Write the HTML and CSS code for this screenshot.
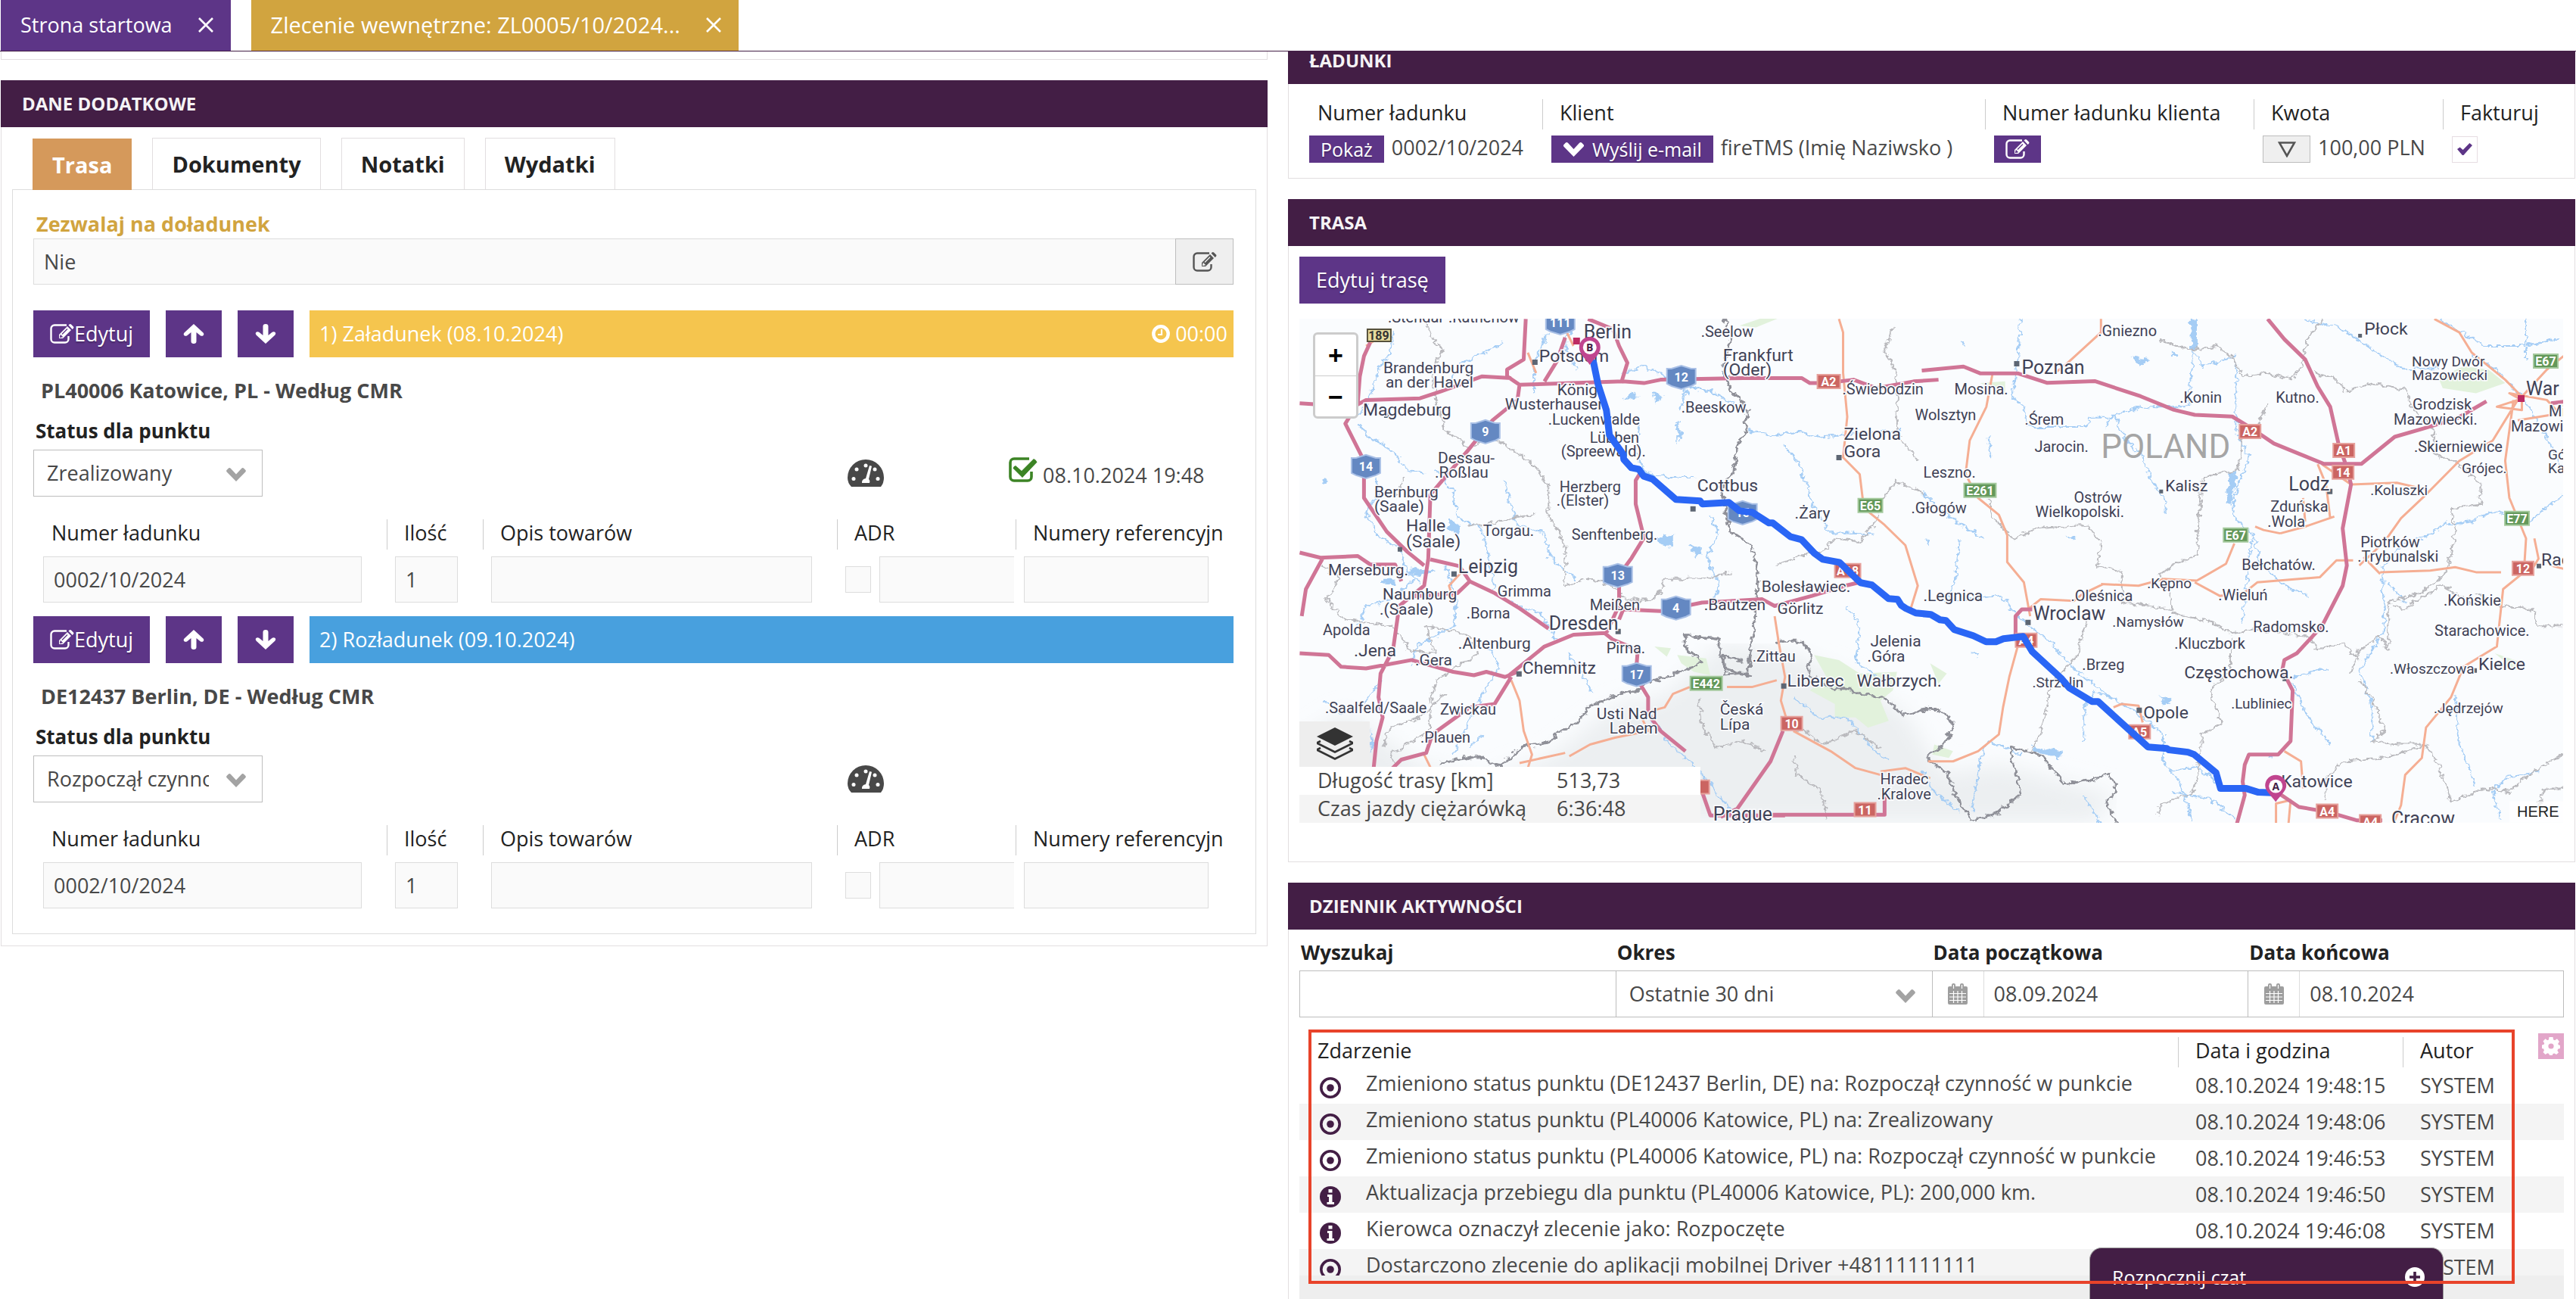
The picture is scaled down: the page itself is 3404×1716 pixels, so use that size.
FILE: index.html
```html
<!DOCTYPE html>
<html lang="pl">
<head>
<meta charset="utf-8">
<title>Zlecenie wewnętrzne: ZL0005/10/2024</title>
<link rel="stylesheet" href="styles.css">
</head>
<body>
<svg class="sprite" aria-hidden="true">
  <symbol id="i-close" viewBox="0 0 20 20"><path d="M1 1 19 19M19 1 1 19" fill="none" stroke="currentColor" stroke-width="2.6"/></symbol>
  <symbol id="i-edit" viewBox="0 0 32 26"><path d="M22 1.500H6a4.500 4.500 0 0 0-4.500 4.500v14A4.500 4.500 0 0 0 6 24.500h14a4.500 4.500 0 0 0 4.500-4.500v-4" fill="none" stroke="currentColor" stroke-width="2.400"/><path d="m12 14 11-11 5 5-11 11h-5zM24.500 1.500l1.500-1.300q1-.5 2 .3l3 3q.8 1 .1 2L29.700 7z" fill="currentColor"/><path d="m14.200 15-.6 2.400 2.400-.5zM16 13.500l7-7" fill="none" stroke="var(--cut)" stroke-width="1.300"/></symbol>
  <symbol id="i-up" viewBox="0 0 28 26"><path d="M14 0 26.500 11.500q1.500 2 .2 3.400-1.800 1.700-4 .3L17.500 11v12q0 3-3.500 3t-3.500-3V11l-5.200 4.200q-2.200 1.400-4-.3-1.300-1.400.2-3.400z" fill="currentColor"/></symbol>
  <symbol id="i-down" viewBox="0 0 28 26"><path d="M14 26 1.500 14.500q-1.500-2-.2-3.400 1.800-1.700 4-.3l5.200 4.200V3q0-3 3.500-3t3.500 3v12l5.200-4.200q2.200-1.400 4 .3 1.300 1.400-.2 3.400z" fill="currentColor"/></symbol>
  <symbol id="i-chevron" viewBox="0 0 26 18"><path d="M3 .5Q4.500-.5 6 1l7 7.500L20 1q1.500-1.500 3-.5l2.500 2.500q.8 1.200-.2 2.400L13 18 .7 5.400q-1-1.200-.2-2.400z" fill="currentColor"/></symbol>
  <symbol id="i-clock" viewBox="0 0 24 24"><circle cx="12" cy="12" r="9.700" fill="none" stroke="currentColor" stroke-width="4.400"/><path d="M13 6v7H8" fill="none" stroke="currentColor" stroke-width="2.200"/></symbol>
  <symbol id="i-gauge" viewBox="0 0 48 36"><path d="M5 36Q0 31 0 24a24 24 0 0 1 48 0q0 7-4 12z" fill="currentColor"/><g fill="#fff"><circle cx="8" cy="25.500" r="2.500"/><circle cx="12" cy="13" r="2.500"/><circle cx="24" cy="8" r="2.500"/><circle cx="36" cy="13" r="2.500"/><circle cx="40" cy="25.500" r="2.500"/><path d="m29 8 3 .8-4 17.200q2 1.500 1 5h-10q-.5-5 5-6z"/></g></symbol>
  <symbol id="i-done" viewBox="0 0 38 33"><path d="M27 2H7a5 5 0 0 0-5 5v19a5 5 0 0 0 5 5h18a5 5 0 0 0 5-5v-7" fill="none" stroke="currentColor" stroke-width="3.600"/><path d="m9 11 8 7L33 2q3 1 4.500 4.500L18 27 5.500 14.500q1-3 3.500-3.500z" fill="currentColor"/></symbol>
  <symbol id="i-triangle" viewBox="0 0 24 21"><path d="M2 1.500h20L12 19z" fill="none" stroke="currentColor" stroke-width="2.600"/></symbol>
  <symbol id="i-calendar" viewBox="0 0 26 28"><path d="M2 4h3V2q0-2 2.500-2T10 2v2h6V2q0-2 2.500-2T21 2v2h3q2 0 2 2v20q0 2-2 2H2q-2 0-2-2V6q0-2 2-2z" fill="currentColor"/><path d="M7.500 2v5M18.500 2v5M2 13.500h22M2 18h22M2 22.500h22M7.500 10v16M13 10v16M18.500 10v16" stroke="#fff" stroke-width="1.200" fill="none"/></symbol>
  <symbol id="i-dot" viewBox="0 0 28 28"><circle cx="14" cy="14" r="12.200" fill="none" stroke="currentColor" stroke-width="3.600"/><circle cx="14" cy="14" r="4.800" fill="currentColor"/></symbol>
  <symbol id="i-info" viewBox="0 0 28 28"><circle cx="14" cy="14" r="14" fill="currentColor"/><path d="M11.500 4h5v4.500h-5zM10 11h6.500v10H19v3h-9.500v-3H12v-7h-2z" fill="#fff"/></symbol>
  <symbol id="i-gear" viewBox="0 0 24 24"><path d="m9.500 0h5l.6 3.500 2 .8L20 2.300 23 6l-1.800 2.700.6 1.500L24 11v4l-2.800.8-.8 2L22 20.500 19 23l-2.700-1.600-1.800.7L13.800 24H10l-.8-2-1.800-.7L4.500 23 1.500 20l1.400-2.600-.7-1.800L0 15v-4.500l2.600-.7.6-1.500L1.500 5.500l3-3.200 2.600 1.900 1.800-.7z" fill="#fff"/><circle cx="12" cy="12" r="3.600" fill="#e2a6c9"/></symbol>
  <symbol id="i-layers" viewBox="0 0 48 44"><path d="M24 0 48 12 24 24 0 12z" fill="#333"/><path d="m5 18-5 2.500 24 12 24-12-5-2.500M5 27l-5 2.500 24 12 24-12-5-2.500" fill="none" stroke="#333" stroke-width="2.600"/></symbol>
  <symbol id="i-plus" viewBox="0 0 26 26"><circle cx="13" cy="13" r="13" fill="#fff"/><path d="M13 6v14M6 13h14" stroke="#431e45" stroke-width="3.600"/></symbol>
</svg>

<nav class="windows" aria-label="Otwarte karty">
  <div class="window"><a href="#start">Strona startowa</a><button aria-label="Zamknij"><svg class="x"><use href="#i-close"/></svg></button></div>
  <div class="window window-current"><a href="#zlecenie">Zlecenie wewnętrzne: ZL0005/10/2024...</a><button aria-label="Zamknij"><svg class="x"><use href="#i-close"/></svg></button></div>
</nav>

<main class="columns">
  <div class="column">
    <div class="panel panel-tail"></div>
    <section class="panel extra">
      <h2 class="panel-head">DANE DODATKOWE</h2>
      <div class="tabs" role="tablist">
        <button class="tab tab-active" role="tab">Trasa</button>
        <button class="tab" role="tab">Dokumenty</button>
        <button class="tab" role="tab">Notatki</button>
        <button class="tab" role="tab">Wydatki</button>
      </div>
      <div class="tab-body">
        <label class="gold-label" for="extra-load">Zezwalaj na doładunek</label>
        <div class="joined">
          <input id="extra-load" class="box" value="Nie" readonly>
          <button class="btn-grey btn-edit" aria-label="Edytuj"><svg class="edit"><use href="#i-edit"/></svg></button>
        </div>

        <article class="point">
          <div class="point-bar">
            <button class="btn"><svg class="edit"><use href="#i-edit"/></svg>Edytuj</button>
            <button class="btn btn-arrow" aria-label="W górę"><svg><use href="#i-up"/></svg></button>
            <button class="btn btn-arrow" aria-label="W dół"><svg><use href="#i-down"/></svg></button>
            <div class="stage stage-load"><span>1) Załadunek (08.10.2024)</span><span class="time"><svg class="clock"><use href="#i-clock"/></svg>00:00</span></div>
          </div>
          <h3 class="place">PL40006 Katowice, PL - Według CMR</h3>
          <label class="field-label" for="st1">Status dla punktu</label>
          <div class="status">
            <div class="select"><select id="st1"><option>Zrealizowany</option></select><svg class="chev"><use href="#i-chevron"/></svg></div>
            <svg class="gauge"><use href="#i-gauge"/></svg>
            <div class="done"><svg><use href="#i-done"/></svg><span>08.10.2024 19:48</span></div>
          </div>
          <table class="cargo">
            <colgroup><col class="c1"><col class="c2"><col class="c3"><col class="c4"><col class="c5"></colgroup>
            <thead><tr><th>Numer ładunku</th><th>Ilość</th><th>Opis towarów</th><th>ADR</th><th><span class="cut">Numery referencyjne</span></th></tr></thead>
            <tbody><tr>
              <td><input class="box" value="0002/10/2024" aria-label="Numer ładunku" readonly></td>
              <td><input class="box" value="1" aria-label="Ilość" readonly></td>
              <td><input class="box" aria-label="Opis towarów" readonly></td>
              <td class="adr"><div><input type="checkbox" class="tick tick-off" aria-label="ADR" disabled><input class="box" aria-label="Klasa ADR" readonly></div></td>
              <td><input class="box" aria-label="Numery referencyjne" readonly></td>
            </tr></tbody>
          </table>
        </article>

        <article class="point">
          <div class="point-bar">
            <button class="btn"><svg class="edit"><use href="#i-edit"/></svg>Edytuj</button>
            <button class="btn btn-arrow" aria-label="W górę"><svg><use href="#i-up"/></svg></button>
            <button class="btn btn-arrow" aria-label="W dół"><svg><use href="#i-down"/></svg></button>
            <div class="stage stage-unload"><span>2) Rozładunek (09.10.2024)</span></div>
          </div>
          <h3 class="place">DE12437 Berlin, DE - Według CMR</h3>
          <label class="field-label" for="st2">Status dla punktu</label>
          <div class="status">
            <div class="select"><select id="st2"><option>Rozpoczął czynność w punkcie</option></select><svg class="chev"><use href="#i-chevron"/></svg></div>
            <svg class="gauge"><use href="#i-gauge"/></svg>
          </div>
          <table class="cargo">
            <colgroup><col class="c1"><col class="c2"><col class="c3"><col class="c4"><col class="c5"></colgroup>
            <thead><tr><th>Numer ładunku</th><th>Ilość</th><th>Opis towarów</th><th>ADR</th><th><span class="cut">Numery referencyjne</span></th></tr></thead>
            <tbody><tr>
              <td><input class="box" value="0002/10/2024" aria-label="Numer ładunku" readonly></td>
              <td><input class="box" value="1" aria-label="Ilość" readonly></td>
              <td><input class="box" aria-label="Opis towarów" readonly></td>
              <td class="adr"><div><input type="checkbox" class="tick tick-off" aria-label="ADR" disabled><input class="box" aria-label="Klasa ADR" readonly></div></td>
              <td><input class="box" aria-label="Numery referencyjne" readonly></td>
            </tr></tbody>
          </table>
        </article>
      </div>
    </section>
  </div>

  <div class="column column-right">
    <section class="panel loads-panel">
      <h2 class="panel-head">ŁADUNKI</h2>
      <table class="loads">
        <colgroup><col class="l1"><col class="l2"><col class="l3"><col class="l4"><col class="l5"></colgroup>
        <thead><tr><th>Numer ładunku</th><th>Klient</th><th>Numer ładunku klienta</th><th>Kwota</th><th>Fakturuj</th></tr></thead>
        <tbody><tr>
          <td><div class="cell"><button class="btn btn-small">Pokaż</button><span>0002/10/2024</span></div></td>
          <td><div class="cell"><button class="btn btn-small"><svg class="chev-btn"><use href="#i-chevron"/></svg>Wyślij e-mail</button><span>fireTMS (Imię Naziwsko )</span></div></td>
          <td><div class="cell"><button class="btn btn-small" aria-label="Edytuj numer"><svg class="edit"><use href="#i-edit"/></svg></button></div></td>
          <td><div class="cell"><button class="btn-grey btn-tri" aria-label="Szczegóły kwoty"><svg><use href="#i-triangle"/></svg></button><span>100,00 PLN</span></div></td>
          <td><div class="cell"><input type="checkbox" class="tick" aria-label="Fakturuj" checked></div></td>
        </tr></tbody>
      </table>
    </section>

    <section class="panel route-panel">
      <h2 class="panel-head">TRASA</h2>
      <div class="route">
        <button class="btn">Edytuj trasę</button>
        <div class="map">
          <svg class="map-art" viewBox="0 0 1671 666" role="img" aria-label="Mapa trasy Katowice – Berlin">
            <defs>
              <filter id="meander" x="-5%" y="-5%" width="110%" height="110%">
                <feTurbulence type="fractalNoise" baseFrequency=".06" numOctaves="3" seed="4"/>
                <feDisplacementMap in="SourceGraphic" scale="22" xChannelSelector="R" yChannelSelector="G"/>
              </filter>
              <filter id="relief" x="0" y="0" width="100%" height="100%">
                <feGaussianBlur stdDeviation="14"/>
              </filter>
            </defs>
            <rect width="1671" height="666" fill="#fafcfe"/>
            <g fill="#eceff1" filter="url(#relief)"><path d="M0 560 60 520 160 590 240 610 330 580 420 510 480 500 560 430 640 440 720 470 800 520 850 600 930 590 1000 610 1080 630 1050 666H0z"/></g>
            <g transform="translate(-27 -22) scale(.5485 .4464)" fill="none" stroke-linejoin="round">
              <g fill="#e2f2dc"><path d="M1290 1045 1350 1060 1400 1100 1490 1095 1480 1150 1450 1180 1470 1240 1420 1260 1390 1230 1340 1230 1340 1190 1280 1150 1320 1110z"/><path d="M960 1045l70 10 10 50-40-10-30-25zM905 1020l40 5-10 25z"/><path d="M1110 70l60-25h40l-60 30z"/></g>
              <g class="water" filter="url(#meander)"><path d="M275 90 270 150 240 200 215 290 190 340M195 360 215 400 250 420 280 450 310 500 345 505M232 520 240 570 210 620 235 690 290 730 310 800 340 830M410 240l30-60 40-20 60-40M650 90l-20 50M700 80l-10 60 30 60M545 530l10 60 20 70 60 20 20 80 60 60M380 500l40 60 10 80 60 30 20 100 10 90 60 40 50 20 40 80M870 360l-10 80 20 60 60 20h60M1040 630l20 60-30 60 30 90-20 70M960 350l10 60M985 260l-20 60M830 210l50-20 50 30 60 30 60 20 60 40M1130 380l60 15 60-10 60 15 60-10 130-10M1215 420l40 60 30 120 40 80 110 10M190 960l20-60 60-20 60-60M400 780l30 100-10 80-90 60-10 60M695 1040l30 50 30 70M500 1000l30 80-60 130-50 130M1370 900l30 60-10 100 60 60M900 1230l40 80 60 60 40 60 60 90M1240 1170l60 60 70 0 60 90 40 40M110 1180l40 40 60-40 40-60M460 1320l30-40M640 100l-25 90 0 80"/></g>
              <g fill="#a5cdf5" filter="url(#meander)"><path d="M410 640l30 20-5 30-30-20zM900 700l50-10 0 40-20-10zM315 785l60 10-20 15-40-5zM250 820l30 0 0 20-30-5zM850 265l20 15-40 10zM900 260l25 20-20 20zM960 360l10 30-10 25zM990 720l30 10-10 30zM220 1265l10 50-8 20zM110 520l8 15-15 3z"/></g>
              <g class="border" filter="url(#meander)"><path d="M350 50l15 50 30 40-25 60 10 110 20 70 60 50 50-30 60 40 50 50 30 60 0 80 40 90 0 120 50-20 60 15 40 50 70-5 20-60 90 0 70-20M615 630l-60 10-60 20-40 0M300 520l-20 60M105 780l40 40-30 60 40 60 120 20 40 70 60 10-20-80 90 20 30 40M480 1040l-40 30-60 50-20 70M250 1320l20-60 70-30 60-70M370 1170l-10 100-90 70 10 30M1200 780l60-30 50-10 30-40 60 10 40-60 10-60 40-60 70 40M1480 70l-20 80 30 60 0 180 50 80M1010 1170l10 80 30 70 70-20 50 30M1220 1260l50 10 40 40 80-40 60 50M1240 1340l10 60 60 50 10 80"/></g>
              <g class="state" filter="url(#meander)"><path d="M1075 50l15 60-20 80 20 70 40 60-5 60-20 50-10 80-30 40 10 60 15 70 50 40 15 80-5 100-20 200-55 5-5-60 50 20M1140 1110l-60-20-20-60 0-30-80-15 0 40 40 40-30 20-70 30-60 20M880 1145l-70 20-60 30-30 50-50 30-20 30-60 10-60 60-50-30-90 20M1200 1005l60 0 25 40-10 60 60 40 30 0 60 20 40 10 40 50 60-20"/></g>
              <g class="orange"><path d="M1350 50l10 40 0 120 10 130-10 120 40 50 10 100 50 50 50 60 30 120-20 80M1195 930l10 80 15 100-10 70 20 80M1080 1140h60l60-20M990 1140l-40 20-20 40-30 10M560 1120l20 60 10 90 20 70-10 40M870 1220l20 50-80 20-60 20-50 35M260 90l-50 40M1240 1270l90 60 60 50 60 20M440 800l-30 40 10 40M690 80l20 50M600 150l20 60M370 1390l-20-50M580 1365l110-30M1450 1390l60-10 60 30"/></g>
              <g class="motor"><path d="M220 120l-15 40-10 60-5 80-30 60 45 110 0 110 55 100 50 60 40 40M50 300l130 10 30-20 130-5 50-20 100-45 70 5M595 50l-5 120-40 30 0 20 30 25 250-10 50 5 40-10 200-5 140 0 20 15 40 0 65-10 55 25 90-20 60-5M580 245l-5 45-60 60-60 90-90 130-5 190-10 80-60 60-15 130-30 70-5 70 10 60-15 70-10 120 5 50M640 235l30-60 20-70M745 50l60 30 15 50 20 50-15 60M50 742l50 15 90-5 30 25 60 0 15 50M105 760l-40 90-10 80M365 762l70 20 25 45 60 35 60 45 70 60M460 827l-30 35-110 10M50 1040l70 5 30 35 60 5 110-25 100 35 50 10 30-10 45 15 30-15M550 1110l90-90 70-35 75-5 20 20 60 30-5 80 30 60 0 50 30 50 60 60M790 978l30-80 0-90 30-50 30-60-20-100 0-70 10-20M820 940l10-30 90 5 100-25 145-10 30 20 90-30 80-30 35-10M560 1110l-40 80-60 10-90 80-15 55-60 20-25 30M1215 1270l-30 90-80 140-40 25M1190 1518l270 0 0-60M1020 1450l20 70 180 0"/></g>
            </g>
            <g transform="translate(823 -22) scale(.551 .4464)" fill="none" stroke-linejoin="round">
              <g fill="#e2f2dc"><path d="M1240 225l60-35 60 10 40 40-70 30-80-15zM140 240l60-5 0 40zM20 1070l40 30-20 30zM30 1310l45 20-10 20-40-10zM1375 1040l70 30-20 20z"/></g>
              <g class="water" filter="url(#meander)"><path d="M235 50l-5 130-15 100 30 30 10 60 50 0 90 0 10-30 60 0 20 60 40 50 30 80 30 60 0 40M650 50l0 130-10 130-100 0-70 15-30 40M655 150l20 40 80-30M755 180l0 200 30 80-30 90-10 80 50 60 15 80 60 70 60 30M920 50l90 30 70 60 80 60 80-5M1320 160l60 40 60 80 60 120 40 100M1450 50l0 120M1240 50l110 80 90 0 90-20M160 400l5 60M0 560l50 60 70 60 30 20M90 700l-10 130-20 60 130-20 40 60 80 80 60 80 60 60 90 70 60 60 0 80 40 60 30 120M240 1340l-80-40-20 60-20 150M260 1310l70 40M390 1300l0-90 20-60 60 30M600 1390l60-15 60 60M600 1450l90 20 60 60M890 1130l20 60 30 60 40 60M880 1115l60-20 40-10M1105 790l5 180-60 120 30 100 0 110M1120 830l40 60M1260 660l60-10 50-30 90 30 80-80M1390 1530l-20-80 30-40 80-20M1280 1160l10 150 40 120M1100 790l60-80 60-20 40-40M790 700l-20 250M0 1390l30 60 60 60M430 1545l-40-80"/></g>
              <g fill="#a5cdf5" filter="url(#meander)"><path d="M645 50h15v90h-12zM740 500l15 5-10 90h-15zM270 1320l70 10-10 15-60-10zM570 1165l30 15-20 10zM120 1035l20 5-5 10zM505 160l40 10-20 20zM600 140l10 20-10 5zM5 700l15 5-5 15zM340 690l30 5-5 10zM830 1340l10-5-3 20zM90 115l15 5-5 10z"/></g>
              <g class="border" filter="url(#meander)"><path d="M570 110l40 20 50 10 50-10 40 40 20 50 60-10 60 20 20-40 20-90 30-50M940 210l50 15 30 40 60-25 80 20 20 60 50 60 0 70 60 30 50 60 0 60-70 10 10 70-20 120-60 60-80 30 0 140-20-40-50 40-20 70M830 300l-30 80M770 400l-10 100-60 10-30 20-10 220-60 30-30 30 30 80 0 20-120-20 0-90-60-20 10-60-30-60-120 10-60 30-50-60-10-60M600 920l100 30 40 30 70-10 120 20 20 40 60-20 40 50M400 930l-30 120-60 80-20 130-30 80M740 990l0 100-50 60 30 100-50 30 0 60-20 110-80 40 0 30M1050 1120l30 50 30 100-30 30 60 10 60 0M1210 1310l30 60 30 110 80-40 60 10 60-60 70-50M1210 1310l-100 40-100 10-40 50 0 60M1330 900l-80-60-60 40-30 30-30-10M1330 860l60 40 80 10 10 50 60 0M1540 1440l-50 0-10 60"/></g>
              <g class="state" filter="url(#meander)"><path d="M0 1205l40 0 40 50-30 60-40 30 50 50 30 90 30 50 60-20 60-60-20-80-10-60 80 30 50 80 70-10 40-20 20 50-30 40 30 60-20 40"/></g>
              <g class="orange"><path d="M430 50l0 40-80 90-30 30M170 210l-15 100-40 100-10 100 30 70 50 50 20 60 0 80 40 60 15 100M430 835l90 5 60-20 80 5 70-50 20-60M255 910l30-30 80 5 20-20 50-30M655 830l60 40 60-10 30-30 150-15 40-50 40 0M230 1020l-20 90-15 90-10 80-50 50-60 30-60 0M460 1200l20-10 40 5 10 50M870 1330l40 30 5 80M1230 50l60 40 30 60 80 80 40 50M1430 290l-60 120-80 60-80 100-60 70-40 70-60 70M1420 290l-20 180 10 110 40 120-5 100-50 50-15 170-80 60-30 90-60 90-10 90-40 50-10 90-20 60M1100 800l120-5 60-10 50 15 60 0M1060 755l40 50M860 685l-40-10-20-10M860 685l60-20 70-30M920 650l-5-70M950 480l20 60 10 100M960 480l70 60 110-5 70 20M1470 700l10 60-20 40M1430 290l-50 20 60 10 0-30-30-20 90 20 30 40-100 20M1540 790l-30-10M850 1545l0-60 35-10-5 70M1440 280l60-80 40-40"/></g>
              <g class="motor"><path d="M0 203l100-12 40 20 90 0 70 28 115-5 110 45 80 40 50 15 90 5 40 30 60 50 60 30 60 30 90 0 80-80 70-25 80-30 70-50M830 50l40 60 50 60 30 80 30 60 20 110 20 70 10 50-20 130 10 110-10 60-50 120-60 80-30 20-5 30 25 60-5 150-30 40-70 0-10 30-5 50 5 40-20 90M845 1445l60 50 70 15 70 25 60 0M225 1000l0-70 15-20 25 0M1510 300l30-5"/></g>
            </g>
            <g fill="#5d6673"><path d="M112 124h7v7h-7zM308 54h7v7h-7zM517 248h7v7h-7zM201 334h7v7h-7zM418 410h7v7h-7zM287 466h7v7h-7zM637 482h7v7h-7zM710 180h7v7h-7zM945 56h7v7h-7zM1359 225h7v7h-7zM960 398h7v7h-7zM1107 514h7v7h-7zM130 302h6v6h-6zM1636 324h6v6h-6zM1400 20h5v5h-5zM1551 462h6v6h-6zM1300 474h5v5h-5zM1137 226h5v5h-5z"/></g>
            <g fill="#bd2b62"><path d="M362 25h9v9h-9zM1611 101h9v9h-9z"/></g>
            <g class="towns">
              <g class="s19">
                <text x="1471" y="63">Nowy Dwór</text><text x="1471" y="81">Mazowiecki</text><text x="1537" y="204">Grójec.</text><text x="1651" y="186">Gó</text><text x="1651" y="204">Ka</text><text x="1416" y="233">.Koluszki</text><text x="1121" y="356">.Kępno</text><text x="1075" y="407">.Namysłów</text><text x="1442" y="469">.Włoszczowa</text><text x="969" y="487">.Strzelin</text><text x="1232" y="515">.Lubliniec</text><text x="1500" y="521">.Jędrzejów</text>
              </g>
              <g class="s20">
                <text x="117" y="5">.Stendal</text><text x="197" y="5">.Rathenow</text><text x="531" y="24">.Seelow</text><text x="718" y="100">.Świebodzin</text><text x="329" y="140">.Luckenwalde</text><text x="505" y="124">.Beeskow</text><text x="384" y="164">Lübben</text><text x="346" y="182">(Spreewald).</text><text x="344" y="229">Herzberg</text><text x="340" y="247">.(Elster)</text><text x="243" y="287">Torgau.</text><text x="360" y="292">Senftenberg.</text><text x="262" y="367">Grimma</text><text x="384" y="385">Meißen</text><text x="221" y="396">.Borna</text><text x="31" y="418">Apolda</text><text x="406" y="442">Pirna.</text><text x="599" y="453">.Zittau</text><text x="34" y="521">.Saalfeld/Saale</text><text x="186" y="523">Zwickau</text><text x="160" y="560">.Plauen</text><text x="768" y="615">Hradec</text><text x="764" y="635">.Kralove</text><text x="1056" y="23">.Gniezno</text><text x="866" y="100">Mosina.</text><text x="1164" y="111">.Konin</text><text x="1291" y="111">Kutno.</text><text x="1472" y="120">Grodzisk</text><text x="1447" y="140">Mazowiecki.</text><text x="814" y="134">Wolsztyn</text><text x="959" y="140">.Śrem</text><text x="1652" y="129">Mi</text><text x="1602" y="149">Mazowie</text><text x="972" y="176">Jarocin.</text><text x="1474" y="176">.Skierniewice</text><text x="825" y="210">Leszno.</text><text x="1024" y="243">Ostrów</text><text x="973" y="262">Wielkopolski.</text><text x="809" y="257">.Głogów</text><text x="1284" y="255">Zduńska</text><text x="1280" y="275">.Wola</text><text x="1403" y="302">Piotrków</text><text x="1399" y="321">.Trybunalski</text><text x="1246" y="332">Bełchatów.</text><text x="1020" y="373">.Oleśnica</text><text x="1215" y="372">.Wieluń</text><text x="1513" y="379">.Końskie</text><text x="1261" y="414">Radomsko.</text><text x="1501" y="419">Starachowice.</text><text x="1157" y="436">.Kluczbork</text><text x="1035" y="464">.Brzeg</text>
              </g>
              <g class="s21">
                <text x="111" y="72">Brandenburg</text><text x="114" y="91">an der Havel</text><text x="341" y="101">König</text><text x="272" y="120">Wusterhausen</text><text x="183" y="191">Dessau-</text><text x="179" y="210">.Roßlau</text><text x="99" y="236">Bernburg</text><text x="99" y="255">(Saale)</text><text x="655" y="264">.Żary</text><text x="38" y="339">Merseburg.</text><text x="110" y="371">Naumburg</text><text x="106" y="391">.(Saale)</text><text x="535" y="385">.Bautzen</text><text x="611" y="361">Bolesławiec.</text><text x="632" y="390">Görlitz</text><text x="210" y="436">.Altenburg</text><text x="153" y="458">.Gera</text><text x="755" y="433">Jelenia</text><text x="751" y="453">.Góra</text><text x="393" y="529">Usti Nad</text><text x="410" y="548">Labem</text><text x="556" y="523">Česká</text><text x="556" y="543">Lípa</text><text x="1145" y="228">Kalisz</text><text x="825" y="373">.Legnica</text>
              </g>
              <g class="s23">
                <text x="317" y="57">Potsdam</text><text x="560" y="56">Frankfurt</text><text x="560" y="75">(Oder)</text><text x="84" y="128">Magdeburg</text><text x="720" y="160">Zielona</text><text x="720" y="183">Gora</text><text x="526" y="228">Cottbus</text><text x="141" y="281">Halle</text><text x="141" y="302">(Saale)</text><text x="72" y="446">.Jena</text><text x="295" y="469">Chemnitz</text><text x="645" y="486">Liberec</text><text x="737" y="486">Wałbrzych.</text><text x="1408" y="21">Płock</text><text x="1642" y="326">Rad</text><text x="1170" y="475">Częstochowa.</text><text x="1559" y="464">Kielce</text><text x="1116" y="528">Opole</text><text x="1298" y="619">Katowice</text>
              </g>
              <g class="s26">
                <text x="376" y="26">Berlin</text><text x="210" y="336">Leipzig</text><text x="330" y="411">Dresden</text><text x="547" y="663">Prague</text><text x="955" y="73">Poznan</text><text x="1622" y="101">War</text><text x="1308" y="227">Lodz</text><text x="970" y="398">Wroclaw</text><text x="1444" y="669">Cracow</text>
              </g>
              <text class="country" x="1060" y="184">POLAND</text>
            </g>
            <g class="shields">
              <g fill="#6488c2" stroke="#a9c0e6" stroke-width="2">
                <path id="hex" d="M326-6h6l13-4 13 4h6v20l-6 3-13 4-13-4-6-3z"/>
                <use href="#hex" x="160" y="72"/><use href="#hex" x="-99" y="144"/><use href="#hex" x="-257" y="190"/><use href="#hex" x="241" y="251"/><use href="#hex" x="76" y="334"/><use href="#hex" x="153" y="377"/><use href="#hex" x="101" y="465"/>
              </g>
              <g fill="#cb6562" stroke="#e6a19c" stroke-width="2">
                <path d="M685 74h30v18h-30zM708 324h34v18h-34zM637 526h28v18h-28zM734 640h28v18h-28zM528 610h14v18h-14zM1243 140h28v18h-28zM1367 165h28v18h-28zM1366 194h28v18h-28zM1604 321h28v18h-28zM947 416h28v18h-28zM1097 537h28v18h-28zM1345 642h28v18h-28zM1402 656h28v18h-28z"/>
              </g>
              <g fill="#63985a" stroke="#a4c99d" stroke-width="2">
                <path d="M739 238h32v18h-32zM517 473h42v18h-42zM1632 47h32v18h-32zM879 218h42v18h-42zM1594 255h32v18h-32zM1222 277h32v18h-32z"/>
              </g>
              <path d="M90 14h31v16H90z" fill="#e6db9c" stroke="#55503c" stroke-width="2"/>
              <g class="shield-text">
                <text x="345" y="11">111</text><text x="505" y="83">12</text><text x="246" y="155">9</text><text x="88" y="201">14</text><text x="586" y="262">15</text><text x="421" y="345">13</text><text x="498" y="388">4</text><text x="446" y="476">17</text>
                <text x="700" y="89">A2</text><text x="725" y="339">A18</text><text x="651" y="541">10</text><text x="748" y="655">11</text><text x="1257" y="155">A2</text><text x="1381" y="180">A1</text><text x="1380" y="209">14</text><text x="1618" y="336">12</text><text x="961" y="431">A4</text><text x="1111" y="552">A5</text><text x="1359" y="657">A4</text><text x="1416" y="671">A4</text>
                <text x="755" y="253">E65</text><text x="538" y="488">E442</text><text x="1648" y="62">E67</text><text x="900" y="233">E261</text><text x="1610" y="270">E77</text><text x="1238" y="292">E67</text>
                <text x="105" y="28" fill="#333">189</text>
              </g>
            </g>
            <g fill="none" class="track">
              <path d="M389 58l6 29 11 34 4 33 18 25 1 7 10 11 10 2 6 9 12 4 31 27 32 2 3 4 35-2 14 11 17 2 22 14h5l23 18 15 4 17 18 11 8 22 4 28 27 15 3 22 18 12 1 5 8 6 4 13 6 20 2 12 7 8 1 11 12 25 8 17 8h13l10-4 26-3 12 20 38 35 11 13 30 18h8l66 60 25 2 3 2 25 3 8 3 29 24 6 21h34l16 5 24 1"/>
            </g>
            <g>
              <path d="M384 61C378 52 370 47 370 38a14 14 0 0 1 28 0c0 9-8 14-14 23z" fill="#c0458f"/><circle cx="384" cy="38" r="9" fill="#fff"/><text class="pin" x="384" y="43">B</text>
              <path d="M1291 639c-6-9-14-14-14-22a14 14 0 0 1 28 0c0 8-8 13-14 22z" fill="#c0458f"/><circle cx="1291" cy="618" r="9" fill="#fff"/><text class="pin" x="1291" y="623">A</text>
            </g>
            <path d="M1600 638h71v28h-71z" fill="#fff" opacity=".75"/>
            <text class="credit" x="1610" y="658">HERE</text>
          </svg>
          <div class="zoomer"><button aria-label="Przybliż">+</button><button aria-label="Oddal">−</button></div>
          <div class="map-foot">
            <button class="layers" aria-label="Warstwy"><svg><use href="#i-layers"/></svg></button>
            <table class="summary">
              <tbody>
                <tr><th scope="row">Długość trasy [km]</th><td>513,73</td></tr>
                <tr><th scope="row">Czas jazdy ciężarówką</th><td>6:36:48</td></tr>
              </tbody>
            </table>
          </div>
        </div>
      </div>
    </section>

    <section class="panel log-panel">
      <h2 class="panel-head">DZIENNIK AKTYWNOŚCI</h2>
      <div class="filters">
        <div class="filter"><label for="f1">Wyszukaj</label><div class="control"><input id="f1"></div></div>
        <div class="filter"><label for="f2">Okres</label><div class="control select"><select id="f2"><option>Ostatnie 30 dni</option></select><svg class="chev"><use href="#i-chevron"/></svg></div></div>
        <div class="filter"><label for="f3">Data początkowa</label><div class="control"><span class="cal"><svg><use href="#i-calendar"/></svg></span><input id="f3" value="08.09.2024"></div></div>
        <div class="filter"><label for="f4">Data końcowa</label><div class="control"><span class="cal"><svg><use href="#i-calendar"/></svg></span><input id="f4" value="08.10.2024"></div></div>
      </div>
      <div class="log">
        <div class="log-list">
          <table class="events">
            <colgroup><col class="e1"><col class="e2"><col class="e3"></colgroup>
            <thead><tr><th>Zdarzenie</th><th>Data i godzina</th><th>Autor</th></tr></thead>
            <tbody>
              <tr><td><div class="event"><svg><use href="#i-dot"/></svg><span>Zmieniono status punktu (DE12437 Berlin, DE) na: Rozpoczął czynność w punkcie</span></div></td><td>08.10.2024 19:48:15</td><td>SYSTEM</td></tr>
              <tr><td><div class="event"><svg><use href="#i-dot"/></svg><span>Zmieniono status punktu (PL40006 Katowice, PL) na: Zrealizowany</span></div></td><td>08.10.2024 19:48:06</td><td>SYSTEM</td></tr>
              <tr><td><div class="event"><svg><use href="#i-dot"/></svg><span>Zmieniono status punktu (PL40006 Katowice, PL) na: Rozpoczął czynność w punkcie</span></div></td><td>08.10.2024 19:46:53</td><td>SYSTEM</td></tr>
              <tr><td><div class="event"><svg><use href="#i-info"/></svg><span>Aktualizacja przebiegu dla punktu (PL40006 Katowice, PL): 200,000 km.</span></div></td><td>08.10.2024 19:46:50</td><td>SYSTEM</td></tr>
              <tr><td><div class="event"><svg><use href="#i-info"/></svg><span>Kierowca oznaczył zlecenie jako: Rozpoczęte</span></div></td><td>08.10.2024 19:46:08</td><td>SYSTEM</td></tr>
              <tr><td><div class="event"><svg><use href="#i-dot"/></svg><span>Dostarczono zlecenie do aplikacji mobilnej Driver +48111111111</span></div></td><td></td><td>SYSTEM</td></tr>
            </tbody>
          </table>
        </div>
        <div class="log-foot"></div>
        <button class="gear" aria-label="Ustawienia tabeli"><svg><use href="#i-gear"/></svg></button>
        <div class="highlight"></div>
      </div>
    </section>
  </div>
</main>

<button class="chat"><span>Rozpocznij czat</span><svg><use href="#i-plus"/></svg></button>
</body>
</html>
```
FILE: styles.css
```css
:root {
  --purple: #5d3587;
  --plum: #431e45;
  --gold: #d1a43f;
  --line: #e2dee0;
  --soft: #dddddd;
  --edge: #bdbdbd;
  --ink: #222222;
  --text: #484848;
}

* { box-sizing: border-box; }

html, body { height: 100%; }

body {
  margin: 0;
  display: flex;
  flex-direction: column;
  overflow: hidden;
  background: #fff;
  color: var(--text);
  font: 27px/38px "Open Sans", "Noto Sans", sans-serif;
}

button, input, select { font: inherit; color: inherit; margin: 0; border-radius: 0; }
button { border: 0; padding: 0; background: none; cursor: pointer; }
svg { display: block; flex: none; }
h2, h3 { margin: 0; }
table { border-collapse: separate; border-spacing: 0; table-layout: fixed; width: 100%; }
th, td { padding: 0; text-align: left; font-weight: 400; white-space: nowrap; }
.sprite { position: absolute; width: 0; height: 0; }

/* open windows */
.windows { display: flex; gap: 27px; padding-left: 1px; border-bottom: 1px solid var(--plum); flex: none; }
.window { display: flex; align-items: center; gap: 34px; height: 67px; padding: 0 23px 2px 26px; background: var(--purple); color: #fff; }
.window-current { background: var(--gold); font-size: 29px; }
.window a { color: inherit; text-decoration: none; white-space: nowrap; }
.window .x { width: 20px; height: 20px; }

/* page columns */
.columns { flex: 1; min-height: 0; overflow: hidden; display: grid; grid-template-columns: minmax(0, 1674fr) minmax(0, 1701fr); gap: 27px; padding: 0 1px; align-items: start; }
.column { display: flex; flex-direction: column; gap: 27px; }
.column-right { margin-top: -19px; }
.panel { border: 1px solid var(--line); border-top: 0; }
.panel-tail { height: 11px; }
.panel-head { margin: 0 -1px; height: 62px; padding-left: 28px; background: var(--plum); color: #f5f3f5; font-size: 24px; line-height: 62px; font-weight: 700; }

/* buttons */
.btn { --cut: #5d3587; display: inline-flex; align-items: center; height: 62px; padding: 0 22px; background: var(--purple); color: #fff; text-shadow: 0 2px 2px rgba(0, 0, 0, .25); white-space: nowrap; }
.btn-arrow { padding: 0 23px; }
.btn-arrow svg { width: 28px; height: 26px; }
.btn-small { height: 36px; padding: 0 15px; font-size: 25px; line-height: 36px; gap: 10px; }
.btn-grey { --cut: #efefef; display: flex; align-items: center; justify-content: center; background: #efefef; border: 1px solid var(--edge); color: #555; }
.edit { width: 32px; height: 26px; }

/* fields */
.box { display: block; width: 100%; height: 61px; padding: 0 13px; background: #fafafa; border: 1px solid var(--soft); }
.select { position: relative; }
.select select { appearance: none; width: 100%; height: 62px; padding: 0 70px 0 17px; background: #fff; border: 1px solid var(--edge); }
.chev { position: absolute; right: 22px; top: 24px; width: 26px; height: 18px; color: #a3a3a3; pointer-events: none; }
.tick { appearance: none; width: 34px; height: 35px; border: 1px solid #e6dde2; background: #fff; display: grid; place-items: center; flex: none; }
.tick::before { content: ""; width: 20px; height: 16px; background: var(--purple); clip-path: polygon(0 50%, 18% 34%, 38% 56%, 82% 0, 100% 18%, 42% 100%, 34% 100%); }
.tick-off { background: #fafafa; border-color: var(--soft); }
.tick-off::before { content: none; }

/* additional data */
.extra { padding-bottom: 15px; }
.tabs { display: flex; align-items: flex-end; gap: 27px; padding: 14px 41px 0; }
.tab { height: 68px; padding: 0 25px; border: 1px solid var(--line); border-bottom: 0; color: var(--ink); font-size: 29px; font-weight: 700; }
.tab-active { background: #d5995b; border-color: #d5995b; color: #fff; margin-bottom: -1px; }
.tab-body { margin: 0 14px; padding: 26px 29px 15px 27px; border: 1px solid var(--soft); }
.gold-label { display: block; padding: 0 4px; color: var(--gold); font-weight: 700; }
.joined { display: flex; }
.joined .box { flex: 1; border-right: 0; }
.btn-edit { width: 77px; height: 61px; }
.point:first-of-type { margin-top: 34px; }
.point-bar { display: flex; }
.point-bar .btn + .btn { margin-left: 21px; }
.stage { flex: 1; display: flex; align-items: center; justify-content: space-between; margin-left: 21px; padding: 0 8px 0 13px; color: #fff; }
.stage-load { background: #f5c54e; }
.stage-unload { background: #48a0de; }
.time { display: flex; align-items: center; gap: 7px; }
.clock { width: 24px; height: 24px; }
.place { margin: 25px 10px 0; font-size: 27px; color: var(--text); font-weight: 700; }
.field-label { display: block; margin: 16px 3px 7px; font-size: 26px; line-height: 36px; font-weight: 700; color: var(--ink); }
.status { display: grid; grid-template-columns: minmax(0, 1076fr) minmax(0, 213fr) minmax(0, 297fr); align-items: center; }
.status .select { width: 303px; }
.gauge { width: 48px; height: 36px; }
.done { display: flex; align-items: flex-start; gap: 7px; }
.done svg { width: 38px; height: 33px; color: #3c8425; }
.done span { padding-top: 5px; }
.cargo { margin-top: 30px; }
.cargo th, .loads th, .events th { height: 40px; padding: 0 0 4px 22px; line-height: 36px; color: var(--ink); border-left: 1px solid #ccc; overflow: hidden; }
.cargo th:first-child, .loads th:first-child, .events th:first-child { border-left: 0; padding-left: 24px; }
.cut { display: block; margin-right: 14px; overflow: hidden; }
.cargo td { padding: 9px 33px 18px 11px; overflow: hidden; }
.cargo td:first-child { padding-left: 13px; }
.cargo .adr { padding-right: 2px; }
.cargo .adr div { display: flex; align-items: center; gap: 11px; }
.cargo .adr .box { flex: 1; min-width: 0; border-right: 0; }
.c1 { width: 467px; } .c2 { width: 127px; } .c3 { width: 468px; } .c4 { width: 236px; }

/* loads */
.loads-panel { padding-bottom: 20px; }
.loads { margin: 20px 0 0 14px; width: calc(100% - 28px); }
.loads td { padding: 8px 0 0 12px; }
.loads td:first-child { padding-left: 13px; }
.cell { display: flex; height: 36px; gap: 10px; align-items: center; line-height: 36px; }
.cell > span { margin-top: -4px; }
.l1 { width: 321px; } .l2 { width: 585px; } .l3 { width: 355px; } .l4 { width: 250px; }
.chev-btn { width: 29px; height: 19px; }
.btn-tri { width: 63px; height: 36px; }
.btn-tri svg { width: 24px; height: 21px; }

/* route and map */
.route { padding: 14px 15px 51px 14px; }
.map { position: relative; margin-top: 20px; }
.map-art { width: 100%; height: auto; overflow: hidden; }
.map-art path { vector-effect: non-scaling-stroke; }
.water { stroke: #a5cdf5; stroke-width: 2px; }
.border { stroke: #b9b9bd; stroke-width: 2px; }
.state { stroke: #8f9098; stroke-width: 3px; }
.orange { stroke: #f5ae93; stroke-width: 3px; }
.motor { stroke: #d07596; stroke-width: 5px; }
.track { stroke: #2a66f5; stroke-width: 9px; stroke-linejoin: round; stroke-linecap: round; }
.towns { font-family: Roboto, sans-serif; fill: #3f4256; stroke: #fbfcfe; stroke-width: 3px; paint-order: stroke; }
.s19 { font-size: 19px; }
.s20 { font-size: 20px; }
.s21 { font-size: 21px; }
.s23 { font-size: 23px; }
.s26 { font-size: 25px; }
.country { font-size: 44px; fill: #a5a5a5; stroke: none; }
.shield-text { font: 700 16px Roboto, sans-serif; fill: #fff; text-anchor: middle; }
.pin { font: 700 14px "Open Sans", sans-serif; fill: #431e45; text-anchor: middle; }
.credit { font: 20px "Liberation Sans", sans-serif; fill: #222; }
.zoomer { position: absolute; left: 18px; top: 18px; width: 60px; border: 3px solid #ccc; border-radius: 6px; background: #fff; }
.zoomer button { display: block; width: 100%; height: 54px; color: #000; font: 700 34px/54px "Liberation Sans", sans-serif; }
.zoomer button + button { border-top: 1px solid #ccc; }
.map-foot { position: absolute; left: 0; bottom: 0; width: 530px; }
.layers { display: grid; place-items: center; width: 93px; height: 60px; background: #eee; }
.layers svg { width: 48px; height: 44px; }
.summary th, .summary td { height: 37px; line-height: 36px; background: #fff; }
.summary tr + tr > * { background: #f4f4f4; }
.summary th { width: 340px; padding-left: 24px; }

/* activity log */
.filters { display: grid; grid-template-columns: repeat(4, minmax(0, 1fr)); padding: 12px 14px 0; }
.filter label { display: block; height: 42px; padding-left: 2px; font-size: 26px; line-height: 36px; font-weight: 700; color: var(--ink); }
.control { display: flex; height: 62px; border: 1px solid var(--edge); border-right: 0; }
.filter:last-child .control { border-right: 1px solid var(--edge); }
.control input { flex: 1; min-width: 0; border: 0; background: #fff; padding: 0 13px; outline: 0; }
.control select { height: 60px; border: 0; }
.cal { display: grid; place-items: center; width: 68px; border-right: 1px solid var(--soft); }
.cal svg { width: 26px; height: 28px; color: #9e9e9e; }
.log { position: relative; margin: 26px 14px 0; }
.log-list { height: 315px; overflow: hidden; }
.events td { height: 48px; padding: 5px 0 0 23px; vertical-align: top; }
.events td:first-child { padding: 2px 0 0 27px; }
.events tbody tr:nth-child(even) td { background: #f4f4f4; }
.event { display: flex; gap: 33px; }
.event svg { width: 28px; height: 28px; margin-top: 11px; color: var(--plum); }
.e2 { width: 297px; } .e3 { width: 213px; }
.log-foot { height: 80px; background: #eee; }
.gear { position: absolute; right: 0; top: -5px; width: 34px; height: 34px; display: grid; place-items: center; background: #e2a6c9; }
.gear svg { width: 24px; height: 24px; }
.highlight { position: absolute; z-index: 2; left: 12px; right: 65px; top: -10px; height: 336px; border: 4px solid #e8432a; pointer-events: none; }

.chat { position: fixed; z-index: 1; right: 175px; bottom: 0; width: 468px; height: 68px; padding: 8px 24px 0 29px; display: flex; align-items: center; justify-content: space-between; font-size: 25px; color: #fff; background: var(--plum); border: 1px solid #999; border-bottom: 0; border-radius: 16px 16px 0 0; }
.chat svg { width: 26px; height: 26px; }
```
